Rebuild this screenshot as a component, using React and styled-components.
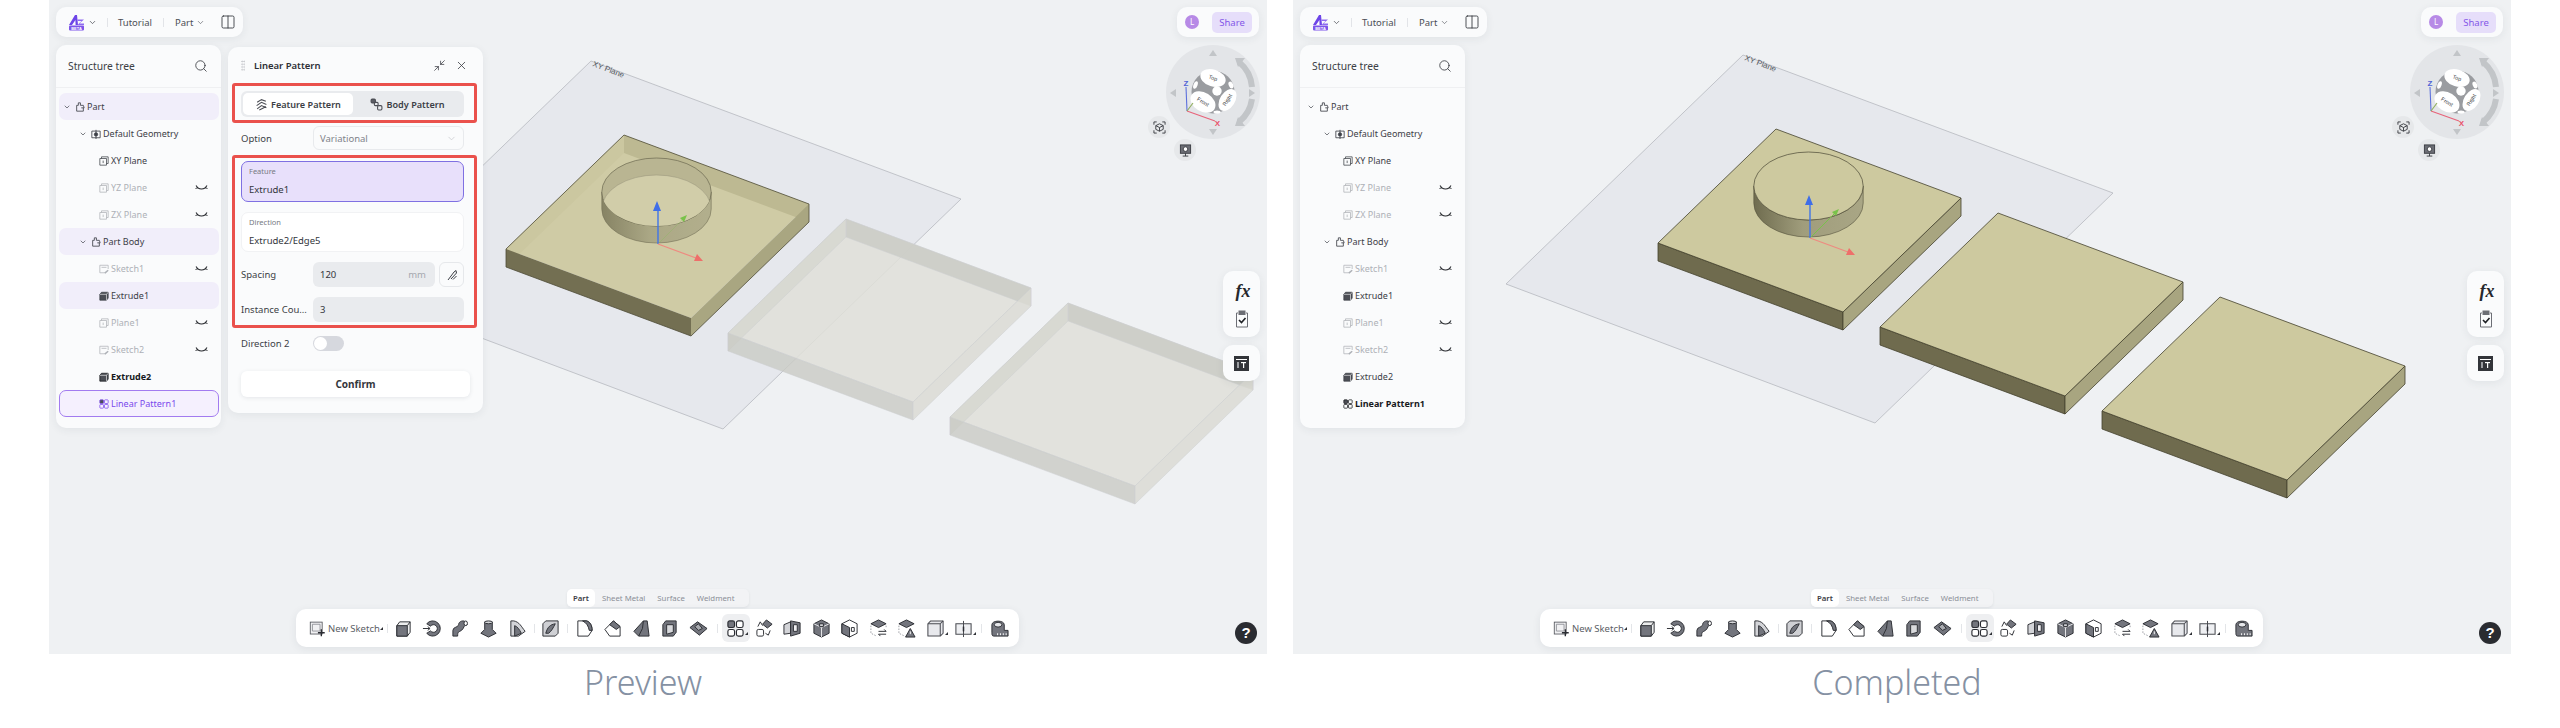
import React from "react";
import styled, { createGlobalStyle } from "styled-components";
import { ChevronDown, Columns2, Minimize2, Search, X } from "lucide-react";

const GlobalStyle = createGlobalStyle`
  html, body {
    margin: 0;
    background: #fff;
    font-family: "Noto Sans", "Liberation Sans", sans-serif;
  }
`;

const Page = styled.div`
  display: flex;
  gap: 26px;
  width: 2560px;
  height: 728px;
  padding-left: 49px;
  box-sizing: border-box;
  overflow: hidden;
`;

const Column = styled.div`
  width: 1218px;
  display: flex;
  flex-direction: column;
`;

const Viewport = styled.div`
  position: relative;
  width: 1218px;
  height: 654px;
  background: #eff1f3;
  overflow: hidden;
`;

const Caption = styled.div`
  height: 74px;
  padding: 8px ${(p) => p.$shift}px 0 0;
  box-sizing: border-box;
  text-align: center;
  font-size: 34px;
  line-height: 40px;
  font-weight: 300;
  color: #8591a3;
`;

const SceneSvg = styled.svg`
  position: absolute;
  inset: 0;
`;

const Card = styled.div`
  background: #fafbfc;
  border-radius: 10px;
  box-shadow: 0 2px 8px rgba(40, 50, 70, 0.07);
`;

const TopBar = styled(Card)`
  position: absolute;
  left: 7px;
  top: 7px;
  width: 187px;
  height: 30px;
  display: flex;
  align-items: center;
  padding-left: 12px;
  box-sizing: border-box;
  font-size: 9.5px;
  color: #4b4e55;
`;

const Divider = styled.span`
  width: 1px;
  height: 9px;
  margin: 0 ${(p) => p.$gap}px;
  background: #e2e4e8;
`;

const PanelToggle = styled.span`
  display: flex;
  margin-left: 15px;
  color: #33363c;
`;

const ShareBar = styled(Card)`
  position: absolute;
  right: 8px;
  top: 7px;
  width: 82px;
  height: 30px;
  display: flex;
  align-items: center;
  gap: 13px;
  padding-left: 8px;
  box-sizing: border-box;
`;

const Avatar = styled.span`
  width: 14px;
  height: 14px;
  border-radius: 50%;
  background: #b78ae6;
  color: #fff;
  font-size: 8px;
  line-height: 14px;
  text-align: center;
`;

const ShareButton = styled.span`
  width: 40px;
  height: 21px;
  border-radius: 5px;
  background: #e6defa;
  color: #8457e8;
  font-size: 9.5px;
  line-height: 21px;
  text-align: center;
`;

const Dock = styled.div`
  position: absolute;
  left: 7px;
  top: 45px;
  display: flex;
  align-items: flex-start;
  gap: 7px;
`;

const TreePanel = styled(Card)`
  width: 165px;
  height: 383px;
  flex: none;
  box-sizing: border-box;
`;

const TreeHeader = styled.div`
  height: 42px;
  display: flex;
  align-items: center;
  justify-content: space-between;
  padding: 0 13px 0 12px;
  border-bottom: 1px solid #eff0f2;
  font-size: 10.3px;
  color: #3c3f46;
`;

const TreeList = styled.div`
  padding: 5px 2px 0 3px;
`;

const Row = styled.div`
  display: flex;
  align-items: center;
  box-sizing: border-box;
  height: 27px;
  padding-left: ${(p) => (p.$leaf ? 39 : 3 + p.$depth * 16)}px;
  padding-right: 10px;
  border-radius: 7px;
  font-size: 9px;
  font-weight: ${(p) => (p.$bold ? 700 : 400)};
  color: ${(p) => (p.$selected ? "#7a49ec" : p.$muted ? "#aeb1b7" : p.$bold ? "#17191d" : "#3d4047")};
  background: ${(p) => (p.$selected ? "#f5f0fe" : p.$hl ? "#f1eefa" : "transparent")};
  border: ${(p) => (p.$selected ? "1px solid #a27bf0" : "1px solid transparent")};
`;

const Chevron = styled.span`
  display: flex;
  width: 8px;
  margin-right: 4px;
  flex: none;
`;

const RowIcon = styled.svg`
  width: 10px;
  height: 10px;
  flex: none;
  margin-right: 2px;
`;

const RowLabel = styled.span`
  flex: 1;
`;

const FeaturePanel = styled(Card)`
  width: 255px;
  height: 366px;
  margin-top: 2px;
  flex: none;
  box-sizing: border-box;
  padding: 0 13px;
  font-size: 9.5px;
  color: #3c3f46;
`;

const PanelHead = styled.div`
  height: 36px;
  display: flex;
  align-items: center;
  padding-right: 2px;
  color: #2c2e34;
  font-size: 9.5px;
  font-weight: 600;
`;

const Grip = styled.span`
  width: 4px;
  height: 11px;
  margin-right: 9px;
  background: radial-gradient(circle, #c4c6cb 0.8px, transparent 1px) 0 0 / 2.5px 2.8px;
`;

const HeadTitle = styled.span`
  flex: 1;
`;

const HeadAction = styled.span`
  display: flex;
  margin-left: 9px;
  color: #3a3c42;
`;

const RedBox = styled.div`
  margin: 0 -7px 0 -9px;
  padding: ${(p) => p.$top}px 10px 3px 6px;
  border: 3px solid #ea514c;
  border-radius: 3px;
`;

const Segment = styled.div`
  display: grid;
  grid-template-columns: 110px 1fr;
  height: 26px;
  padding: 2px;
  box-sizing: border-box;
  border-radius: 6px;
  background: #e9ebee;
`;

const SegmentItem = styled.div`
  display: flex;
  align-items: center;
  justify-content: center;
  gap: 3px;
  border-radius: 5px;
  background: ${(p) => (p.$active ? "#fff" : "transparent")};
  font-size: 9.1px;
  font-weight: 600;
  color: #3b3e45;
`;

const FormRow = styled.div`
  display: flex;
  align-items: center;
  margin-top: ${(p) => p.$top}px;
`;

const FormLabel = styled.span`
  width: 72px;
  flex: none;
  white-space: nowrap;
`;

const Select = styled.div`
  width: 151px;
  height: 24px;
  box-sizing: border-box;
  display: flex;
  align-items: center;
  justify-content: space-between;
  padding: 0 6px;
  border: 1px solid #e8eaed;
  border-radius: 6px;
  color: #7f828a;
`;

const PickField = styled.div`
  height: ${(p) => p.$h}px;
  box-sizing: border-box;
  margin-top: ${(p) => p.$top}px;
  padding: 4px 7px 0;
  border-radius: 7px;
  border: 1px solid ${(p) => (p.$active ? "#7f70e2" : "#f1f2f4")};
  background: ${(p) => (p.$active ? "#e8e0fb" : "#fff")};
`;

const PickLabel = styled.div`
  font-size: 7.5px;
  line-height: 11px;
  color: #777a82;
`;

const PickValue = styled.div`
  margin-top: 6px;
  font-size: 9.5px;
  line-height: 14px;
  color: #33363c;
`;

const NumberInput = styled.div`
  flex: 1;
  height: 25px;
  display: flex;
  align-items: center;
  justify-content: space-between;
  padding: 0 9px 0 7px;
  border-radius: 6px;
  background: #e9ebee;
  color: #33363c;
`;

const Unit = styled.span`
  color: #a5a8ae;
`;

const FormulaButton = styled.span`
  width: 25px;
  height: 25px;
  margin-left: 4px;
  flex: none;
  box-sizing: border-box;
  display: flex;
  align-items: center;
  justify-content: center;
  border: 1px solid #e6e8eb;
  border-radius: 6px;
`;

const Toggle = styled.span`
  position: relative;
  display: block;
  width: 31px;
  height: 15px;
  border-radius: 8px;
  background: #d6d8de;

  &::after {
    content: "";
    position: absolute;
    left: 1px;
    top: 1px;
    width: 13px;
    height: 13px;
    border-radius: 50%;
    background: #fff;
  }
`;

const ConfirmButton = styled.div`
  height: 26px;
  margin-top: 20px;
  border-radius: 6px;
  background: #fff;
  box-shadow: 0 1px 4px rgba(40, 50, 70, 0.1);
  text-align: center;
  line-height: 26px;
  font-size: 10px;
  font-weight: 700;
  color: #34363c;
`;

const GizmoSvg = styled.svg`
  position: absolute;
  left: 1116px;
  top: 45px;
`;

const RoundButton = styled.span`
  position: absolute;
  left: ${(p) => p.$x}px;
  top: ${(p) => p.$y}px;
  width: 22px;
  height: 22px;
  display: flex;
  align-items: center;
  justify-content: center;
  border-radius: 50%;
  background: #e6e8ea;
`;

const SideDock = styled.div`
  position: absolute;
  left: 1174px;
  top: 271px;
  display: flex;
  flex-direction: column;
  gap: 8px;
`;

const SideCard = styled(Card)`
  width: 37px;
  height: ${(p) => p.$h}px;
  display: flex;
  flex-direction: column;
  align-items: center;
  justify-content: center;
  gap: 9px;
`;

const Fx = styled.span`
  font-family: "Liberation Serif", serif;
  font-style: italic;
  font-weight: 700;
  font-size: 18px;
  line-height: 20px;
  margin-left: 3px;
  color: #26282d;
`;

const BottomStack = styled.div`
  position: absolute;
  left: 247px;
  bottom: 7px;
  width: 723px;
  display: flex;
  flex-direction: column;
  gap: 2px;
`;

const Tabs = styled.div`
  align-self: flex-start;
  display: flex;
  width: 182px;
  height: 18px;
  margin-left: 271px;
  border-radius: 5px;
  background: #f2f3f5;
  box-shadow: 0 1px 3px rgba(40, 50, 70, 0.08);
`;

const Tab = styled.span`
  padding: 0 ${(p) => (p.$active ? 6 : 6)}px;
  margin-right: ${(p) => (p.$active ? 1 : 0)}px;
  border-radius: 5px;
  background: ${(p) => (p.$active ? "#fff" : "transparent")};
  font-size: 7.8px;
  line-height: 19px;
  white-space: nowrap;
  font-weight: ${(p) => (p.$active ? 600 : 400)};
  color: ${(p) => (p.$active ? "#3b3e45" : "#8b8f97")};
`;

const ToolBar = styled.div`
  width: 723px;
  height: 38px;
  box-sizing: border-box;
  display: flex;
  align-items: center;
  padding-left: 13px;
  border-radius: 10px;
  background: #fff;
  box-shadow: 0 2px 8px rgba(40, 50, 70, 0.08);
`;

const NewSketch = styled.div`
  position: relative;
  width: 76px;
  flex: none;
  display: flex;
  align-items: center;
  gap: 2px;
  font-size: 9.5px;
  color: #5b5e65;
`;

const ToolButton = styled.span`
  position: relative;
  width: 28.5px;
  height: 28px;
  flex: none;
  display: flex;
  align-items: center;
  justify-content: center;
  border-radius: 6px;
  background: ${(p) => (p.$active ? "#eeeff1" : "transparent")};
`;

const Caret = styled.span`
  position: absolute;
  right: 2px;
  bottom: 7px;
  border-left: 3px solid transparent;
  border-bottom: 3px solid #2f3136;
`;

const ToolSep = styled.span`
  width: ${(p) => p.$w}px;
  flex: none;
  display: flex;
  justify-content: center;

  &::after {
    content: "";
    width: 1px;
    height: 9px;
    background: #e3e5e8;
  }
`;

const HelpButton = styled.span`
  position: absolute;
  left: 1186px;
  top: 622px;
  width: 22px;
  height: 22px;
  border-radius: 50%;
  background: #2a2c31;
  color: #fff;
  font-family: "Liberation Sans", sans-serif;
  font-size: 15px;
  font-weight: 700;
  line-height: 22px;
  text-align: center;
`;

// 3d scene, coordinates are for the preview camera, completed is shifted
const P = (x, y, pts) => pts.map(([a, b]) => `${x + a},${y + b}`).join(" ");
const H = 18;
const B = [118, -114];
const F = [185, 69];
const R = [303, -45];

function Plate({ x, y, mode }) {
  if (mode === "solid") {
    return (
      <g stroke="#45432f" strokeWidth="0.8" strokeLinejoin="round">
        <polygon points={P(x, y, [[0, 0], F, [F[0], F[1] + H], [0, H]])} fill="#6f6b4e" />
        <polygon points={P(x, y, [F, R, [R[0], R[1] + H], [F[0], F[1] + H]])} fill="#a8a580" />
        <polygon points={P(x, y, [[0, 0], B, R, F])} fill="#cdc99f" />
      </g>
    );
  }
  if (mode === "glass") {
    return (
      <g strokeLinejoin="round">
        <polygon points={P(x, y, [[0, 0], B, R, F])} fill="#cfcba5" />
        <polygon points={P(x, y, [B, R, [R[0], R[1] + H], [B[0], B[1] + H]])} fill="#bdb992" />
        <polygon points={P(x, y, [[0, 0], B, [B[0], B[1] + H], [0, H]])} fill="#cbc7a0" />
        <polygon points={P(x, y, [[0, 0], F, [F[0], F[1] + H], [0, H]])} fill="#736f52" />
        <polygon points={P(x, y, [F, R, [R[0], R[1] + H], [F[0], F[1] + H]])} fill="#a9a681" />
        <polyline points={P(x, y, [[0, 0], B, R, [R[0], R[1] + H], [F[0], F[1] + H], [0, H], [0, 0]])} fill="none" stroke="#4f4d39" strokeWidth="0.8" />
      </g>
    );
  }
  return (
    <g fill="#c9cac4" fillOpacity="0.8" stroke="#cdced0" strokeWidth="0.5" strokeLinejoin="round">
      <polygon points={P(x, y, [[0, 0], B, R, F])} fill="#dfdfd8" fillOpacity="0.85" />
      <polygon points={P(x, y, [B, R, [R[0], R[1] + H], [B[0], B[1] + H]])} />
      <polygon points={P(x, y, [[0, 0], B, [B[0], B[1] + H], [0, H]])} fill="#d6d7d0" />
      <polygon points={P(x, y, [[0, 0], F, [F[0], F[1] + H], [0, H]])} />
      <polygon points={P(x, y, [F, R, [R[0], R[1] + H], [F[0], F[1] + H]])} fill="#d9d9d2" />
    </g>
  );
}

function Scene({ preview }) {
  const id = preview ? "prev" : "done";
  const cx = 607.5;
  const cy = 192;
  const rx = 54.7;
  const ry = 34;
  const h = 17;
  return (
    <SceneSvg width="1218" height="654" viewBox={preview ? "0 0 1218 654" : "92 6 1218 654"}>
      <defs>
        <linearGradient id={id + "-wall"} x1="0" x2="1">
          <stop offset="0" stopColor="#6f6c4f" />
          <stop offset="0.45" stopColor="#a09d7c" />
          <stop offset="1" stopColor="#a9a685" />
        </linearGradient>
        <clipPath id={id + "-top"}>
          <ellipse cx={cx} cy={cy} rx={rx} ry={ry} />
        </clipPath>
      </defs>
      <polygon points="542,61 912,199 674,429 305,290" fill="#e6e8ed" stroke="#b6b9bf" strokeWidth="0.8" />
      <text x="0" y="0" fontSize="8" fill="#55585e" transform="translate(543,66) rotate(21)" fontFamily="Liberation Sans, sans-serif">
        XY Plane
      </text>
      <Plate x={457} y={249} mode={preview ? "glass" : "solid"} />
      <path
        d={`M${cx - rx} ${cy} A${rx} ${ry} 0 0 0 ${cx + rx} ${cy} V${cy + h} A${rx} ${ry} 0 0 1 ${cx - rx} ${cy + h} Z`}
        fill={`url(#${id}-wall)`}
        opacity={preview ? 0.75 : 1}
        stroke="#55533d"
        strokeWidth="0.6"
      />
      {preview ? (
        <g>
          <ellipse cx={cx} cy={cy} rx={rx} ry={ry} fill="#b9b592" stroke="#6b6950" strokeWidth="0.7" />
          <ellipse cx={cx} cy={cy + h} rx={rx} ry={ry} fill="#d1cda9" stroke="#96937a" strokeWidth="0.5" clipPath={`url(#${id}-top)`} />
        </g>
      ) : (
        <ellipse cx={cx} cy={cy} rx={rx} ry={ry} fill="#cdc99f" stroke="#4a4835" strokeWidth="0.7" />
      )}
      <line x1="609" y1="244" x2="636" y2="217" stroke="#79c24a" strokeWidth="1" opacity={preview ? 0.25 : 1} />
      <polygon points="631,218 638,215 635,222" fill="#79c24a" />
      <line x1="609" y1="244" x2="609" y2="208" stroke="#3f74e8" strokeWidth="1.4" />
      <polygon points="608,201 604,211 612,211" fill="#3f6ee8" />
      <line x1="609" y1="244" x2="647" y2="258" stroke="#ee8a80" strokeWidth="1.2" />
      <polygon points="654,261 645,261 648,254" fill="#ee6f6a" />
      <Plate x={679} y={333} mode={preview ? "ghost" : "solid"} />
      <Plate x={901} y={417} mode={preview ? "ghost" : "solid"} />
    </SceneSvg>
  );
}

function Gizmo() {
  const faces = [
    { cx: 48, cy: 33, rx: 13, ry: 8.5, r: 18, t: "Top" },
    { cx: 38, cy: 57, rx: 13.5, ry: 9.5, r: 32, t: "Front" },
    { cx: 62.5, cy: 55, rx: 12, ry: 7.5, r: -58, t: "Right" },
  ];
  return (
    <GizmoSvg width="100" height="100" viewBox="0 0 100 100">
      <circle cx="48" cy="47" r="47" fill="#e3e5e8" />
      <g fill="#c2c5c8">
        <polygon points="48,5 44,11 52,11" />
        <polygon points="5,48 11,44 11,52" />
        <polygon points="48,90 44,84 52,84" />
        <polygon points="90,48 84,44 84,52" />
        <polygon points="70,13 80,13 73,22" />
        <polygon points="70,81 80,81 73,72" />
      </g>
      <path d="M74 17 A36 36 0 0 1 87 42" fill="none" stroke="#c2c5c8" strokeWidth="6" />
      <path d="M87 54 A36 36 0 0 1 74 77" fill="none" stroke="#c2c5c8" strokeWidth="6" />
      <circle cx="48" cy="47" r="21.5" fill="#9a9ca0" />
      {faces.map((f) => (
        <g key={f.t} transform={`rotate(${f.r} ${f.cx} ${f.cy})`}>
          <ellipse cx={f.cx} cy={f.cy} rx={f.rx} ry={f.ry} fill="#fff" />
          <text x={f.cx} y={f.cy + 1.8} fontSize="5.5" textAnchor="middle" fill="#3b3d42" fontFamily="Liberation Sans, sans-serif">
            {f.t}
          </text>
        </g>
      ))}
      <circle cx="52" cy="46" r="4.7" fill="#fff" />
      <ellipse cx="30.5" cy="40" rx="2" ry="4" fill="#fff" transform="rotate(20 30.5 40)" />
      <ellipse cx="66" cy="40" rx="2.2" ry="3.6" fill="#fff" transform="rotate(-25 66 40)" />
      <ellipse cx="52" cy="67" rx="3.5" ry="1.5" fill="#fff" />
      <line x1="22" y1="66" x2="21" y2="42" stroke="#5b6fdc" strokeWidth="1.1" />
      <line x1="22" y1="66" x2="50" y2="76" stroke="#e8637a" strokeWidth="1.1" />
      <line x1="22" y1="66" x2="28" y2="58" stroke="#8fae5a" strokeWidth="1.1" />
      <text x="21" y="40.5" fontSize="8" fontWeight="700" textAnchor="middle" fill="#4f63d6" fontFamily="Liberation Sans, sans-serif">Z</text>
      <text x="52.5" y="81" fontSize="8" fontWeight="700" textAnchor="middle" fill="#e8506a" fontFamily="Liberation Sans, sans-serif">X</text>
    </GizmoSvg>
  );
}

function Logo() {
  return (
    <svg width="17" height="17" viewBox="0 0 17 17" style={{ marginRight: 3 }}>
      <path d="M1 11 L7 1 L9 1 L10 11 H7.6 L7.4 6 L4 11 Z" fill="#6d45e8" />
      <path d="M9.5 5.5 H16 L11.5 9.5 H16 V11 H9.5 L13.5 7 H9.5 Z" fill="#8f6cf0" />
      <rect x="1" y="11.6" width="15" height="4.8" rx="0.8" fill="#7d55ea" />
      <text x="8.5" y="15.5" fontSize="4" fontWeight="700" textAnchor="middle" fill="#fff" fontFamily="Liberation Sans, sans-serif">BETA</text>
    </svg>
  );
}

const EYE = (
  <svg width="13" height="8" viewBox="0 0 13 8" fill="none" stroke="#26282d" strokeWidth="1.1">
    <path d="M1 1.5 L3 4 Q6.5 6 10 4 L12 1.5" />
    <path d="M0.5 4.5 L3 3.6 M12.5 4.5 L10 3.6" strokeWidth="0.9" />
  </svg>
);

const treeGlyphs = {
  part: <path d="M2 11 V4 H4 V1 H6.5 V4 H10 L11 7 H7.5 M2 11 H10 V7" fill="none" stroke="currentColor" strokeWidth="1" />,
  geo: (
    <g fill="none" stroke="currentColor" strokeWidth="1">
      <path d="M1 2.5 H11 V10.5 H1 Z" />
      <path d="M6 1 V12" />
      <circle cx="6" cy="6.5" r="2" fill="currentColor" />
    </g>
  ),
  plane: (
    <g fill="none" stroke="currentColor" strokeWidth="0.9">
      <path d="M1 3 H9 V11 H1 Z" />
      <path d="M3 3 V1 H11 V9 H9" />
      <path d="M5 5.5 V8.5" />
    </g>
  ),
  sketch: (
    <g fill="none" stroke="currentColor" strokeWidth="0.9">
      <path d="M1 1.5 H11 V6 M7 10.5 H1 V1.5" />
      <path d="M3 4 H9" />
      <path d="M7 11 L11 7.5" strokeWidth="1.8" />
    </g>
  ),
  extrude: (
    <g stroke="currentColor" strokeWidth="0.9">
      <path d="M1 4 L3 1.5 H11 V8.5 L9 11 H1 Z" fill="#4c4e55" />
      <path d="M1 4 H9 V11 M9 4 L11 1.5" fill="none" stroke="#fff" strokeWidth="0.7" />
    </g>
  ),
  pattern: (
    <g stroke="currentColor" strokeWidth="0.9" fill="none">
      <rect x="1" y="1" width="4.4" height="4.4" rx="0.8" fill="#4c4e55" />
      <rect x="6.6" y="1" width="4.4" height="4.4" rx="0.8" />
      <rect x="1" y="6.6" width="4.4" height="4.4" rx="0.8" />
      <rect x="6.6" y="6.6" width="4.4" height="4.4" rx="0.8" />
    </g>
  ),
};

const D = "#73757d";
const K = "#2b2d33";
const toolGlyphs = {
  sketch: (
    <g fill="none" stroke={K} strokeWidth="1">
      <rect x="1.5" y="2.5" width="14" height="14" fill="#f1f1f3" stroke="#55575d" />
      <path d="M4 5 H13 V13 H4 Z" stroke="#8a8c92" />
      <path d="M14.5 11 V19 M10.5 15 H18.5" strokeWidth="1.6" />
    </g>
  ),
  extrude: (
    <g stroke={K} strokeWidth="1" strokeLinejoin="round">
      <path d="M3 7 L6 3 H17 V14 L14 18 H3 Z" fill="#eceded" />
      <path d="M3 7 H14 V18 H3 Z" fill={D} />
      <path d="M14 7 L17 3" fill="none" />
    </g>
  ),
  revolve: (
    <g stroke={K} strokeWidth="1">
      <path d="M5 5 A8 8 0 1 1 5 15 L9 12.5 A4 4 0 1 0 9 7.5 Z" fill={D} />
      <path d="M1 10 H8 M6 8 L8.5 10 L6 12" fill="none" />
    </g>
  ),
  sweep: (
    <g stroke={K} strokeWidth="1" strokeLinejoin="round">
      <path d="M2 18 V12 C2 8 8 9 8 6 C8 2 14 1 15 3 L17 6 C13 6 14 10 11 12 C8 14 7 13 7 18 Z" fill={D} />
      <ellipse cx="15.5" cy="4.5" rx="1.8" ry="2.4" fill="#fff" />
    </g>
  ),
  loft: (
    <g stroke={K} strokeWidth="1" strokeLinejoin="round">
      <path d="M6 3 H14 V11 L18 15 L10 19 L2 15 L6 11 Z" fill={D} />
      <ellipse cx="10" cy="3.5" rx="4" ry="1.5" fill="#d6d7da" />
    </g>
  ),
  rib: (
    <g stroke={K} strokeWidth="1" strokeLinejoin="round">
      <path d="M3 18 V2 H6 C12 3 14 8 18 13 L11 18 Z" fill="#d3d4d8" />
      <path d="M7 18 V7 C10 8 12 11 14 15 Z" fill={D} />
    </g>
  ),
  hole: (
    <g stroke={K} strokeWidth="1" strokeLinejoin="round">
      <path d="M2 5 L5 2 H18 V15 L15 18 H2 Z" fill="#cfd0d4" />
      <path d="M5 15 C7 8 10 6 15 5 C13 9 11 13 8 15 Z" fill={D} />
    </g>
  ),
  fillet: (
    <g stroke={K} strokeWidth="1" strokeLinejoin="round">
      <path d="M3 2 H12 C16 3 18 7 18 12 L14 18 H3 Z" fill="#fff" />
      <path d="M8 2 H12 C16 3 18 7 18 12 L15 12 C14 7 12 4 8 2 Z" fill={D} />
    </g>
  ),
  chamfer: (
    <g stroke={K} strokeWidth="1" strokeLinejoin="round">
      <path d="M2 11 L11 2 L18 8 V18 H7 Z" fill="#fff" />
      <path d="M7 6 L11 2 L18 8 L14 11 Z" fill={D} />
    </g>
  ),
  draft: (
    <g stroke={K} strokeWidth="1" strokeLinejoin="round">
      <path d="M2 13 L12 2 H16 L18 18 H7 Z" fill={D} />
      <path d="M12 2 L11 10 L7 18" fill="none" />
    </g>
  ),
  shell: (
    <g stroke={K} strokeWidth="1" strokeLinejoin="round">
      <path d="M3 6 L6 2 H17 V14 L14 18 H3 Z" fill={D} />
      <path d="M7 6 H14 V14 L7 16 Z" fill="#d9dadd" />
    </g>
  ),
  thicken: (
    <g stroke={K} strokeWidth="1" strokeLinejoin="round">
      <path d="M1 9 L9 3 L19 10 L11 17 Z" fill={D} />
      <path d="M6 8 L10 5 L14 10 L10 12 Z" fill="#a9abb0" />
    </g>
  ),
  pattern: (
    <g stroke={K} strokeWidth="1.2">
      <rect x="2" y="2" width="7" height="7" rx="2" fill={D} />
      <rect x="11" y="2" width="7" height="7" rx="2" fill="#fff" />
      <rect x="2" y="11" width="7" height="7" rx="2" fill="#fff" />
      <rect x="11" y="11" width="7" height="7" rx="2" fill="#fff" />
    </g>
  ),
  transform: (
    <g stroke={K} strokeWidth="1" strokeLinejoin="round">
      <path d="M12 1 L18 5.5 L13 9.5 L8 5.5 Z" fill={D} />
      <rect x="2" y="11" width="7" height="7" rx="1.5" fill="#fff" />
      <path d="M3 8 L5.5 3 L8 7 M16 12 L14 17 L11 15" fill="none" />
    </g>
  ),
  mirror: (
    <g stroke={K} strokeWidth="1" strokeLinejoin="round">
      <path d="M1 6 L8 3 V15 L1 16 Z" fill="#d3d4d8" />
      <path d="M8 2 L18 4 V15 L8 18 Z" fill={D} />
      <path d="M11 6 H15 V13 H11 Z" fill="#f0f0f2" />
    </g>
  ),
  boolean: (
    <g stroke={K} strokeWidth="1" strokeLinejoin="round">
      <path d="M10 1 L18 5 V15 L10 19 L2 15 V5 Z" fill={D} />
      <path d="M2 5 L10 9 L18 5 M10 9 V19" fill="none" stroke="#e9e9eb" />
      <rect x="8" y="5" width="4" height="3" fill="#d0d1d5" />
    </g>
  ),
  cube: (
    <g stroke={K} strokeWidth="1" strokeLinejoin="round">
      <path d="M10 1 L18 5 V15 L10 19 L2 15 V5 Z" fill="#fff" />
      <path d="M2 5 L10 9 V19 L2 15 Z" fill={D} />
      <rect x="12" y="9" width="3" height="4" fill="none" />
    </g>
  ),
  swap: (
    <g stroke={K} strokeWidth="1" strokeLinejoin="round">
      <path d="M10 1 L18 5 L10 9 L2 5 Z" fill={D} />
      <path d="M2 7 V15 L8 18 M18 7 V9" fill="none" stroke="#9a9ca2" strokeDasharray="1.6 1.4" />
      <path d="M10 13 H18 L16 11 M18 16 H10 L12 18" fill="none" />
    </g>
  ),
  warn: (
    <g stroke={K} strokeWidth="1" strokeLinejoin="round">
      <path d="M10 1 L18 5 L10 9 L2 5 Z" fill={D} />
      <path d="M2 7 V15 L8 18" fill="none" stroke="#9a9ca2" strokeDasharray="1.6 1.4" />
      <path d="M14 10 L19 19 H9 Z" fill={D} />
      <path d="M14 13 V16" stroke="#fff" />
    </g>
  ),
  box: (
    <g stroke="#4a4c52" strokeWidth="1.1" strokeLinejoin="round">
      <path d="M2 5 L5 2 H18 V15 L15 18 H2 Z" fill="#e8e9ed" />
      <path d="M2 5 H15 V18 M15 5 L18 2" fill="none" />
    </g>
  ),
  plane: (
    <g stroke="#4a4c52" strokeWidth="1.1">
      <path d="M2 5 H18 V16 H2 Z" fill="#eeeff2" />
      <path d="M10 2 V19" />
      <path d="M10 8 V13" strokeWidth="1.6" stroke={K} />
    </g>
  ),
  measure: (
    <g stroke={K} strokeWidth="1">
      <path d="M2 6 C2 1 15 1 15 6 V12 H19 V18 H4 C2 18 2 16 2 14 Z" fill={D} />
      <ellipse cx="8.5" cy="6" rx="4" ry="2.5" fill="#e6e7ea" />
      <path d="M8 15 V17 M11 15 V17 M14 15 V17 M17 15 V17" stroke="#fff" />
    </g>
  ),
};

const toolLayout = [
  ["extrude", "revolve", "sweep", "loft", "rib"],
  ["hole"],
  ["fillet", "chamfer", "draft", "shell", "thicken"],
];
const toolLayoutEnd = ["mirror", "boolean", "cube", "swap", "warn"];

function Tool({ name, active, caret }) {
  return (
    <ToolButton $active={active}>
      <svg width="19" height="19" viewBox="0 0 20 20">{toolGlyphs[name]}</svg>
      {caret && <Caret />}
    </ToolButton>
  );
}

const treeRows = [
  { label: "Part", depth: 0, icon: "part", chevron: true, hl: "preview" },
  { label: "Default Geometry", depth: 1, icon: "geo", chevron: true },
  { label: "XY Plane", icon: "plane" },
  { label: "YZ Plane", icon: "plane", muted: true, eye: true },
  { label: "ZX Plane", icon: "plane", muted: true, eye: true },
  { label: "Part Body", depth: 1, icon: "part", chevron: true, hl: "preview" },
  { label: "Sketch1", icon: "sketch", muted: true, eye: true },
  { label: "Extrude1", icon: "extrude", hl: "preview" },
  { label: "Plane1", icon: "plane", muted: true, eye: true },
  { label: "Sketch2", icon: "sketch", muted: true, eye: true },
  { label: "Extrude2", icon: "extrude", boldIn: "preview" },
  { label: "Linear Pattern1", icon: "pattern", boldIn: "done", selectedIn: "preview" },
];

function Tree({ preview }) {
  const mode = preview ? "preview" : "done";
  return (
    <TreePanel>
      <TreeHeader>
        Structure tree
        <Search size={14} color="#33363c" strokeWidth={1.4} />
      </TreeHeader>
      <TreeList>
        {treeRows.map((row) => (
          <Row
            key={row.label}
            $depth={row.depth}
            $leaf={row.depth === undefined}
            $muted={row.muted}
            $hl={row.hl === mode}
            $bold={row.boldIn === mode}
            $selected={row.selectedIn === mode}
          >
            {row.chevron && (
              <Chevron>
                <ChevronDown size={8} strokeWidth={2} />
              </Chevron>
            )}
            <RowIcon viewBox="0 0 12 12">{treeGlyphs[row.icon]}</RowIcon>
            <RowLabel>{row.label}</RowLabel>
            {row.eye && EYE}
          </Row>
        ))}
      </TreeList>
    </TreePanel>
  );
}

function Feature() {
  return (
    <FeaturePanel>
      <PanelHead>
        <Grip />
        <HeadTitle>Linear Pattern</HeadTitle>
        <HeadAction>
          <Minimize2 size={13} strokeWidth={1.4} />
        </HeadAction>
        <HeadAction>
          <X size={13} strokeWidth={1.5} />
        </HeadAction>
      </PanelHead>
      <RedBox $top={5}>
        <Segment>
          <SegmentItem $active>
            <svg width="13" height="13" viewBox="0 0 12 12" fill="none" stroke="#4c4e55" strokeWidth="1">
              <path d="M2 4 L6 1.5 L10 3 M1.5 7 L6 4 L10.5 6 M2 10 L6 7 L10.5 9 M4 11 L10 8" />
            </svg>
            Feature Pattern
          </SegmentItem>
          <SegmentItem>
            <svg width="13" height="13" viewBox="0 0 12 12" fill="none" stroke="#4c4e55" strokeWidth="1">
              <rect x="1" y="1" width="4" height="3.5" rx="1" fill="#5c5e65" />
              <rect x="4" y="4" width="3.5" height="3" rx="1" />
              <rect x="7" y="7" width="4" height="4" rx="1" />
            </svg>
            Body Pattern
          </SegmentItem>
        </Segment>
      </RedBox>
      <FormRow $top={3}>
        <FormLabel>Option</FormLabel>
        <Select>
          Variational
          <ChevronDown size={11} color="#c3c5c9" strokeWidth={1.5} />
        </Select>
      </FormRow>
      <div style={{ height: 5 }} />
      <RedBox $top={3}>
        <PickField $active $h={41} $top={0}>
          <PickLabel>Feature</PickLabel>
          <PickValue>Extrude1</PickValue>
        </PickField>
        <PickField $h={40} $top={10}>
          <PickLabel>Direction</PickLabel>
          <PickValue>Extrude2/Edge5</PickValue>
        </PickField>
        <FormRow $top={10}>
          <FormLabel>Spacing</FormLabel>
          <NumberInput>
            120
            <Unit>mm</Unit>
          </NumberInput>
          <FormulaButton>
            <svg width="12" height="12" viewBox="0 0 12 12" fill="none" stroke="#3c3f46" strokeWidth="1">
              <path d="M2 11 L8 3 L10 1.5 L10.5 4 L5 10" />
              <path d="M7 10.5 L10.5 7" />
            </svg>
          </FormulaButton>
        </FormRow>
        <FormRow $top={10}>
          <FormLabel>Instance Cou...</FormLabel>
          <NumberInput>3</NumberInput>
        </FormRow>
      </RedBox>
      <FormRow $top={8}>
        <FormLabel>Direction 2</FormLabel>
        <Toggle />
      </FormRow>
      <ConfirmButton>Confirm</ConfirmButton>
    </FeaturePanel>
  );
}

function Tools() {
  return (
    <ToolBar>
      <NewSketch>
        <svg width="17" height="17" viewBox="0 0 20 20">{toolGlyphs.sketch}</svg>
        New Sketch
        <Caret />
      </NewSketch>
      <ToolSep $w={4} />
      {toolLayout.map((group, i) => (
        <React.Fragment key={i}>
          {group.map((name) => (
            <Tool key={name} name={name} />
          ))}
          <ToolSep $w={i === 2 ? 9 : 5} />
        </React.Fragment>
      ))}
      <Tool name="pattern" active caret />
      <Tool name="transform" />
      {toolLayoutEnd.map((name) => (
        <Tool key={name} name={name} />
      ))}
      <Tool name="box" caret />
      <Tool name="plane" caret />
      <ToolSep $w={7} />
      <Tool name="measure" />
    </ToolBar>
  );
}

function Frame({ preview, title, shift }) {
  return (
    <Column>
      <Viewport>
        <Scene preview={preview} />
        <TopBar>
          <Logo />
          <ChevronDown size={9} strokeWidth={2} />
          <Divider $gap={10} />
          Tutorial
          <Divider $gap={11} />
          Part
          <ChevronDown size={9} strokeWidth={1.6} style={{ marginLeft: 3 }} />
          <PanelToggle>
            <Columns2 size={16} strokeWidth={1.3} />
          </PanelToggle>
        </TopBar>
        <ShareBar>
          <Avatar>L</Avatar>
          <ShareButton>Share</ShareButton>
        </ShareBar>
        <Dock>
          <Tree preview={preview} />
          {preview && <Feature />}
        </Dock>
        <Gizmo />
        <RoundButton $x={1099} $y={116}>
          <svg width="13" height="13" viewBox="0 0 14 14" fill="none" stroke="#3a3c42" strokeWidth="1">
            <path d="M1 4 V1 H4 M10 1 H13 V4 M13 10 V13 H10 M4 13 H1 V10" />
            <path d="M7 3 L11 5 V9 L7 11 L3 9 V5 Z M3 5 L7 7 L11 5 M7 7 V11" />
          </svg>
        </RoundButton>
        <RoundButton $x={1125} $y={139}>
          <svg width="13" height="13" viewBox="0 0 14 14" stroke="#3a3c42" strokeWidth="1">
            <rect x="1.5" y="1" width="11" height="9" fill="#6c6e75" />
            <circle cx="7" cy="5.5" r="2.5" fill="#fff" />
            <path d="M7 10 V13 M4 13 H10" fill="none" />
          </svg>
        </RoundButton>
        <SideDock>
          <SideCard $h={66}>
            <Fx>fx</Fx>
            <svg width="14" height="18" viewBox="0 0 14 18" fill="none" stroke="#6c6e75" strokeWidth="1">
              <path d="M3 3 H1.5 V17 H12.5 V3 H11" />
              <rect x="4" y="1" width="6" height="3.5" fill="#6c6e75" />
              <path d="M4 10 L6.5 12.5 L10.5 8" stroke="#1e2024" strokeWidth="1.6" />
            </svg>
          </SideCard>
          <SideCard $h={36}>
            <svg width="15" height="15" viewBox="0 0 15 15">
              <rect width="15" height="15" fill="#33353a" />
              <rect x="2" y="3" width="11" height="1" fill="#fff" />
              <rect x="3" y="6" width="2" height="6" fill="#9a9ca0" />
              <rect x="7" y="6" width="5" height="1.2" fill="#fff" />
              <rect x="9" y="7" width="1.2" height="5" fill="#fff" />
            </svg>
          </SideCard>
        </SideDock>
        <BottomStack>
          <Tabs>
            <Tab $active>Part</Tab>
            <Tab>Sheet Metal</Tab>
            <Tab>Surface</Tab>
            <Tab>Weldment</Tab>
          </Tabs>
          <Tools />
        </BottomStack>
        <HelpButton>?</HelpButton>
      </Viewport>
      <Caption $shift={shift}>{title}</Caption>
    </Column>
  );
}

export default function App() {
  return (
    <>
      <GlobalStyle />
      <Page>
        <Frame preview title="Preview" shift={30} />
        <Frame title="Completed" shift={10} />
      </Page>
    </>
  );
}
